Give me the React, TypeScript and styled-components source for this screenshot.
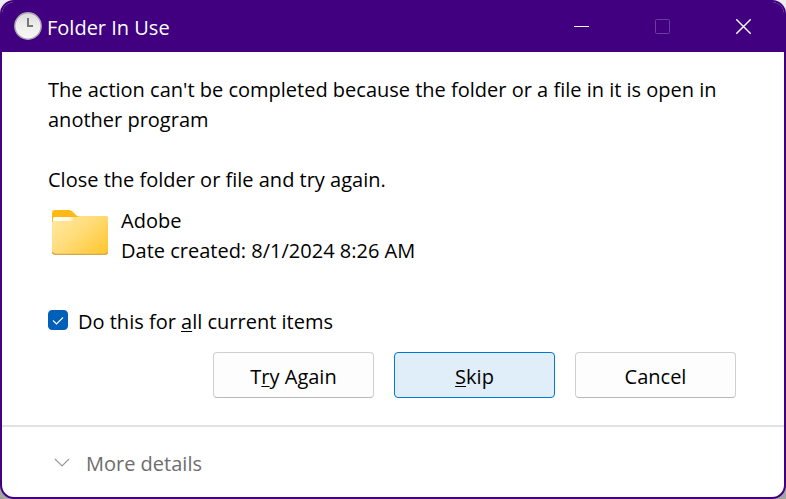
import React, { useState } from "react";
import styled, { createGlobalStyle } from "styled-components";

const GlobalStyle = createGlobalStyle`
  * { box-sizing: border-box; }
  body {
    margin: 0;
    background: linear-gradient(#ededf0, #a3a3a3);
    font-family: "Open Sans", "Noto Sans", sans-serif;
    font-size: 20px;
    line-height: 30px;
    color: #000;
  }
`;

const Dialog = styled.main`
  display: flex;
  flex-direction: column;
  min-height: 100vh;
  border: 2px solid #40007f;
  border-radius: 14px;
  background: #fff;
  overflow: hidden;
`;

const TitleBar = styled.header`
  display: flex;
  align-items: center;
  height: 50px;
  padding-left: 12px;
  background: #40007f;
  color: #fff;
`;

const AppIcon = styled.svg`
  margin-bottom: 2px;
`;

const Title = styled.h1`
  flex: 1;
  margin: 0;
  padding: 2px 0 0 5px;
  font-size: 20px;
  font-weight: 400;
`;

const CaptionButton = styled.button`
  display: flex;
  align-items: center;
  justify-content: center;
  width: 81px;
  height: 50px;
  padding: 0;
  border: 0;
  background: transparent;
  color: #fff;

  &:disabled {
    color: #6d3d9d;
  }
`;

const Body = styled.section`
  display: flex;
  flex: 1;
  flex-direction: column;
  padding: 23px 48px 27px 46px;
`;

const Message = styled.p`
  margin: 0 0 30px;
`;

const Instruction = styled.p`
  margin: 0;
`;

const FolderRow = styled.div`
  display: flex;
  gap: 12px;
  margin-top: 11px;
  padding-left: 3px;
`;

const FolderText = styled.div`
  display: flex;
  flex-direction: column;
`;

const CheckLabel = styled.label`
  display: flex;
  align-items: center;
  align-self: flex-start;
  gap: 10px;
  margin-top: 41px;
`;

const CheckSlot = styled.span`
  display: grid;
  width: 20px;
  height: 20px;
  margin-bottom: 4px;

  & > * {
    grid-area: 1 / 1;
  }
`;

const Checkbox = styled.input`
  appearance: none;
  width: 20px;
  height: 20px;
  margin: 0;
  border: 1px solid #868686;
  border-radius: 4px;
  background: #fff;

  & + svg {
    visibility: hidden;
    pointer-events: none;
  }

  &:checked {
    border-color: #005fb8;
    background: #005fb8;
  }

  &:checked + svg {
    visibility: visible;
  }
`;

const Mnemonic = styled.span`
  text-decoration: underline;
  text-decoration-thickness: 1px;
  text-underline-offset: 2px;
  text-decoration-skip-ink: none;
`;

const Actions = styled.div`
  display: flex;
  justify-content: flex-end;
  gap: 20px;
  margin-top: 15px;
`;

const ActionButton = styled.button<{ $primary?: boolean }>`
  width: 161px;
  height: 46px;
  padding: 4px 0 0;
  border: 1px solid ${(p) => (p.$primary ? "#0078d4" : "#d0d0d0")};
  border-bottom-color: ${(p) => (p.$primary ? "#0078d4" : "#b8b8b8")};
  border-radius: 4px;
  background: ${(p) => (p.$primary ? "#e0eef9" : "#fdfdfd")};
  color: #000;
  font: inherit;
`;

const Footer = styled.footer`
  padding: 22px 46px 18px;
  border-top: 2px solid #e2e2e2;
`;

const DetailsButton = styled.button`
  display: flex;
  align-items: center;
  gap: 16px;
  padding: 0 0 0 6px;
  border: 0;
  background: transparent;
  color: #6d6d6d;
  font: inherit;
`;

const Chevron = styled.svg`
  margin-bottom: 2px;
`;

function ClockIcon() {
  return (
    <AppIcon width="28" height="28" viewBox="0 0 28 28" aria-hidden="true">
      <defs>
        <linearGradient id="clock-face" x1="0" y1="0" x2="0" y2="1">
          <stop offset="0" stopColor="#dcdcdc" />
          <stop offset="0.5" stopColor="#eeeeed" />
          <stop offset="1" stopColor="#f8f8f8" />
        </linearGradient>
      </defs>
      <circle cx="14" cy="14" r="13.2" fill="url(#clock-face)" stroke="#aaa6ae" strokeWidth="1.4" />
      <path d="M14 6v8h5" fill="none" stroke="#777" strokeWidth="2" />
    </AppIcon>
  );
}

function FolderIcon() {
  return (
    <svg width="58" height="60" viewBox="0 0 58 60" aria-hidden="true">
      <defs>
        <linearGradient id="folder-front" x1="0" y1="0" x2="1" y2="0.8">
          <stop offset="0" stopColor="#ffe9a6" />
          <stop offset="0.5" stopColor="#ffdc79" />
          <stop offset="1" stopColor="#ffc936" />
        </linearGradient>
        <linearGradient id="folder-paper" x1="0" y1="0" x2="1" y2="0">
          <stop offset="0" stopColor="#fff" />
          <stop offset="0.65" stopColor="#fff7df" />
          <stop offset="1" stopColor="#ffc52f" />
        </linearGradient>
      </defs>
      <path d="M1 7Q1 4 4 4H18Q20 4 21.500 5.500L26 10H54Q57 10 57 13V30H1Z" fill="#ffb915" />
      <path d="M2 12.500Q2 11 4 11H28L22 16H2Z" fill="url(#folder-paper)" />
      <path
        d="M1 17Q1 15 4 15H19Q21 15 22.500 14L26 11Q27.500 10 30 10H54Q57 10 57 13V46Q57 49 54 49H4Q1 49 1 46Z"
        fill="url(#folder-front)"
      />
      <path
        d="M1.500 46Q2 48.300 4.500 48.300H53.500Q56 48.300 56.500 46"
        fill="none"
        stroke="#d4a94b"
        strokeWidth="1.2"
      />
    </svg>
  );
}

export default function App() {
  const [all, setAll] = useState(true);

  return (
    <>
      <GlobalStyle />
      <Dialog role="dialog" aria-labelledby="dialog-title">
        <TitleBar>
          <ClockIcon />
          <Title id="dialog-title">Folder In Use</Title>
          <CaptionButton type="button" aria-label="Minimize">
            <svg width="15" height="16" fill="none" stroke="currentColor" aria-hidden="true">
              <path d="M0 7.500H15" />
            </svg>
          </CaptionButton>
          <CaptionButton type="button" aria-label="Maximize" disabled>
            <svg width="15" height="16" fill="none" stroke="currentColor" aria-hidden="true">
              <rect x="0.5" y="0.5" width="14" height="14" rx="1" />
            </svg>
          </CaptionButton>
          <CaptionButton type="button" aria-label="Close">
            <svg width="15" height="16" fill="none" stroke="currentColor" strokeWidth="1.4" aria-hidden="true">
              <path d="M0.300 0.300L14.700 14.700M14.700 0.300L0.300 14.700" />
            </svg>
          </CaptionButton>
        </TitleBar>
        <Body>
          <Message>
            The action can't be completed because the folder or a file in it is open in another program
          </Message>
          <Instruction>Close the folder or file and try again.</Instruction>
          <FolderRow>
            <FolderIcon />
            <FolderText>
              <span>Adobe</span>
              <span>Date created: 8/1/2024 8:26 AM</span>
            </FolderText>
          </FolderRow>
          <CheckLabel>
            <CheckSlot>
              <Checkbox type="checkbox" checked={all} onChange={(e) => setAll(e.target.checked)} />
              <svg width="20" height="20" viewBox="0 0 20 20" fill="none" stroke="#fff" strokeWidth="1.1" aria-hidden="true">
                <path d="M5 10.500L8.500 14L15 7.500" />
              </svg>
            </CheckSlot>
            <span>
              Do this for <Mnemonic>a</Mnemonic>ll current items
            </span>
          </CheckLabel>
          <Actions>
            <ActionButton type="button">
              T<Mnemonic>r</Mnemonic>y Again
            </ActionButton>
            <ActionButton type="button" $primary>
              <Mnemonic>S</Mnemonic>kip
            </ActionButton>
            <ActionButton type="button">Cancel</ActionButton>
          </Actions>
        </Body>
        <Footer>
          <DetailsButton type="button">
            <Chevron width="16" height="10" viewBox="0 0 16 10" fill="none" stroke="#999" strokeWidth="1.2" aria-hidden="true">
              <path d="M1 1L8 8L15 1" />
            </Chevron>
            More details
          </DetailsButton>
        </Footer>
      </Dialog>
    </>
  );
}
